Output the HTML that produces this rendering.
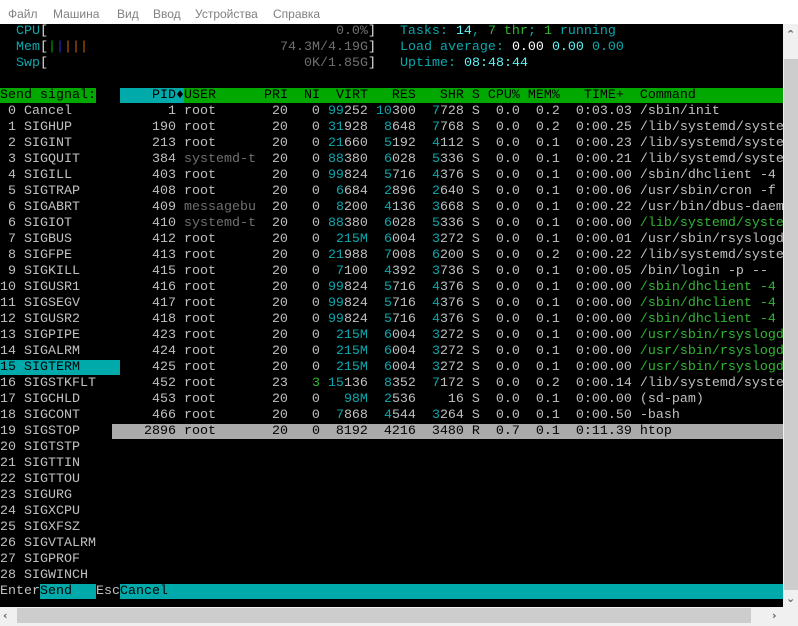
<!DOCTYPE html>
<html><head><meta charset="utf-8"><style>
*{margin:0;padding:0}
body{width:798px;height:626px;background:#f0f0f0;position:relative;overflow:hidden}
.menu{position:absolute;left:0;top:0;width:798px;height:24px;background:#fff;font:12px "Liberation Sans","Noto Sans CJK SC",sans-serif;color:#808080}
.menu span{position:absolute;top:7px}
.term{position:absolute;left:0;top:24px;width:783px;height:583px;background:#000;overflow:hidden;font-family:"Liberation Mono",monospace;font-size:13.33px;color:#c0c0c0}
.term div{height:16px;line-height:16px;white-space:pre}
.c{color:#0aa8ad}.d{color:#707070}.G{color:#2eb82e}.w{color:#e0e0e0}.B{color:#5ff5f5}.W{color:#fff}
.hg{background:#00a800;color:#000}.hc{background:#00aaaa;color:#000}.sel{background:#aaaaaa;color:#000}
.vs{position:absolute;left:783px;top:24px;width:15px;height:583px;background:#f0f0f0}
.vt{position:absolute;left:784px;top:59px;width:14px;height:531px;background:#cdcdcd}
.hs{position:absolute;left:0;top:607px;width:798px;height:19px;background:#f0f0f0}
.ht{position:absolute;left:17px;top:608px;width:734px;height:15px;background:#cdcdcd}
.ar{position:absolute;font:bold 11px "DejaVu Sans",sans-serif;color:#606060}
</style></head><body>
<div class="menu"><span style="left:8px">Файл</span><span style="left:53px">Машина</span><span style="left:117px">Вид</span><span style="left:153px">Ввод</span><span style="left:195px">Устройства</span><span style="left:273px">Справка</span></div>
<div class="term">
<div>  <span class="c">CPU</span><span class="w">[</span>                                    <span class="d">0.0%</span><span class="w">]</span>   <span class="c">Tasks: </span><span class="B">14</span><span class="c">, </span><span class="G">7 thr</span><span class="c">; </span><span class="G">1</span><span class="c"> running</span></div>
<div>  <span class="c">Mem</span><span class="w">[</span><span style="color:#00a800">|</span><span style="color:#2a2ad0">|</span><span style="color:#c06000">|||</span>                        <span class="d">74.3M/4.19G</span><span class="w">]</span>   <span class="c">Load average: </span><span class="W">0.00 </span><span class="B">0.00 </span><span class="c">0.00</span></div>
<div>  <span class="c">Swp</span><span class="w">[</span>                                <span class="d">0K/1.85G</span><span class="w">]</span>   <span class="c">Uptime: </span><span class="B">08:48:44</span></div>
<div> </div>
<div><span class="hg">Send signal:</span>   <span class="hc">    PID♦</span><span class="hg">USER      PRI  NI  VIRT   RES   SHR S CPU% MEM%   TIME+  Command                  </span></div>
<div> 0 Cancel            1 root       20   0 <span class="c">99</span>252 <span class="c">10</span>300  <span class="c">7</span>728 S  0.0  0.2  0:03.03 /sbin/init</div>
<div> 1 SIGHUP          190 root       20   0 <span class="c">31</span>928  <span class="c">8</span>648  <span class="c">7</span>768 S  0.0  0.2  0:00.25 /lib/systemd/systemd-journald</div>
<div> 2 SIGINT          213 root       20   0 <span class="c">21</span>660  <span class="c">5</span>192  <span class="c">4</span>112 S  0.0  0.1  0:00.23 /lib/systemd/systemd-udevd</div>
<div> 3 SIGQUIT         384 <span class="d">systemd-t</span>  20   0 <span class="c">88</span>380  <span class="c">6</span>028  <span class="c">5</span>336 S  0.0  0.1  0:00.21 /lib/systemd/systemd-timesyncd</div>
<div> 4 SIGILL          403 root       20   0 <span class="c">99</span>824  <span class="c">5</span>716  <span class="c">4</span>376 S  0.0  0.1  0:00.00 /sbin/dhclient -4</div>
<div> 5 SIGTRAP         408 root       20   0  <span class="c">6</span>684  <span class="c">2</span>896  <span class="c">2</span>640 S  0.0  0.1  0:00.06 /usr/sbin/cron -f</div>
<div> 6 SIGABRT         409 <span class="d">messagebu</span>  20   0  <span class="c">8</span>200  <span class="c">4</span>136  <span class="c">3</span>668 S  0.0  0.1  0:00.22 /usr/bin/dbus-daemon</div>
<div> 6 SIGIOT          410 <span class="d">systemd-t</span>  20   0 <span class="c">88</span>380  <span class="c">6</span>028  <span class="c">5</span>336 S  0.0  0.1  0:00.00 <span class="G">/lib/systemd/systemd-timesyncd</span></div>
<div> 7 SIGBUS          412 root       20   0  <span class="c">215M</span>  <span class="c">6</span>004  <span class="c">3</span>272 S  0.0  0.1  0:00.01 /usr/sbin/rsyslogd</div>
<div> 8 SIGFPE          413 root       20   0 <span class="c">21</span>988  <span class="c">7</span>008  <span class="c">6</span>200 S  0.0  0.2  0:00.22 /lib/systemd/systemd-logind</div>
<div> 9 SIGKILL         415 root       20   0  <span class="c">7</span>100  <span class="c">4</span>392  <span class="c">3</span>736 S  0.0  0.1  0:00.05 /bin/login -p --</div>
<div>10 SIGUSR1         416 root       20   0 <span class="c">99</span>824  <span class="c">5</span>716  <span class="c">4</span>376 S  0.0  0.1  0:00.00 <span class="G">/sbin/dhclient -4</span></div>
<div>11 SIGSEGV         417 root       20   0 <span class="c">99</span>824  <span class="c">5</span>716  <span class="c">4</span>376 S  0.0  0.1  0:00.00 <span class="G">/sbin/dhclient -4</span></div>
<div>12 SIGUSR2         418 root       20   0 <span class="c">99</span>824  <span class="c">5</span>716  <span class="c">4</span>376 S  0.0  0.1  0:00.00 <span class="G">/sbin/dhclient -4</span></div>
<div>13 SIGPIPE         423 root       20   0  <span class="c">215M</span>  <span class="c">6</span>004  <span class="c">3</span>272 S  0.0  0.1  0:00.00 <span class="G">/usr/sbin/rsyslogd</span></div>
<div>14 SIGALRM         424 root       20   0  <span class="c">215M</span>  <span class="c">6</span>004  <span class="c">3</span>272 S  0.0  0.1  0:00.00 <span class="G">/usr/sbin/rsyslogd</span></div>
<div><span class="hc">15 SIGTERM     </span>    425 root       20   0  <span class="c">215M</span>  <span class="c">6</span>004  <span class="c">3</span>272 S  0.0  0.1  0:00.00 <span class="G">/usr/sbin/rsyslogd</span></div>
<div>16 SIGSTKFLT       452 root       23   <span class="G">3</span> <span class="c">15</span>136  <span class="c">8</span>352  <span class="c">7</span>172 S  0.0  0.2  0:00.14 /lib/systemd/systemd --user</div>
<div>17 SIGCHLD         453 root       20   0   <span class="c">98M</span>  <span class="c">2</span>536    16 S  0.0  0.1  0:00.00 (sd-pam)</div>
<div>18 SIGCONT         466 root       20   0  <span class="c">7</span>868  <span class="c">4</span>544  <span class="c">3</span>264 S  0.0  0.1  0:00.50 -bash</div>
<div>19 SIGSTOP    <span class="sel">    2896 root       20   0  8192  4216  3480 R  0.7  0.1  0:11.39 htop                     </span></div>
<div>20 SIGTSTP</div>
<div>21 SIGTTIN</div>
<div>22 SIGTTOU</div>
<div>23 SIGURG</div>
<div>24 SIGXCPU</div>
<div>25 SIGXFSZ</div>
<div>26 SIGVTALRM</div>
<div>27 SIGPROF</div>
<div>28 SIGWINCH</div>
<div>Enter<span class="hc">Send   </span>Esc<span class="hc">Cancel                                                                                    </span></div>
</div>
<div class="vs"></div><div class="vt"></div>
<div class="ar" style="left:786px;top:28px">&#8963;</div>
<div class="ar" style="left:786px;top:592px">&#8964;</div>
<div class="hs"></div><div class="ht"></div>
<div class="ar" style="left:3px;top:609px">&#8249;</div>
<div class="ar" style="left:772px;top:609px">&#8250;</div>
</body></html>
